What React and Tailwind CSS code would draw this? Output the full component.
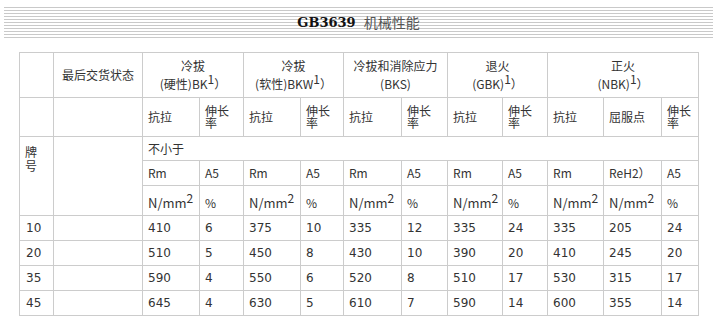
import React from "react";

const colWidths = [34, 89, 57, 44, 57, 43, 58, 46, 55, 45, 56, 58, 37];

const dataRows = [
  ["10", "410", "6", "375", "10", "335", "12", "335", "24", "335", "205", "24"],
  ["20", "510", "5", "450", "8", "430", "10", "390", "20", "410", "245", "20"],
  ["35", "590", "4", "550", "6", "520", "8", "510", "17", "530", "315", "17"],
  ["45", "645", "4", "630", "5", "610", "7", "590", "14", "600", "355", "14"],
];

const cjk = "font-['Noto_Sans_CJK_SC',sans-serif]";
const num = "font-['DejaVu_Sans',sans-serif]";
const td = "border border-[#cccccc] px-[5px] align-middle";

const Sup = ({ children }) => (
  <span className="relative -top-[5px] text-[12px] leading-none">{children}</span>
);

const Unit = () => (
  <>
    N/mm<Sup>2</Sup>
  </>
);

export default function App() {
  const unitRow = ["unit", "%", "unit", "%", "unit", "%", "unit", "%", "unit", "unit", "%"];
  const symRow = ["Rm", "A5", "Rm", "A5", "Rm", "A5", "Rm", "A5", "Rm", "ReH2）", "A5"];
  const subRow = ["抗拉", "伸长率", "抗拉", "伸长率", "抗拉", "伸长率", "抗拉", "伸长率", "抗拉", "屈服点", "伸长率"];
  const head = `${td} text-center leading-[18px]`;

  return (
    <div className={`w-[713px] h-[320px] bg-white text-[#333] overflow-hidden ${cjk}`}>
      {/* title bar */}
      <div className="mt-[7px] ml-[4px] h-[31px] flex items-center justify-center bg-[repeating-linear-gradient(to_bottom,#c9c9c9_0px,#c9c9c9_1px,transparent_1px,transparent_3px)]">
        <span className="font-['DejaVu_Serif',serif] font-bold text-[13px] text-[#111]">GB3639</span>
        <span className="ml-[8px] text-[14px] text-[#555]">机械性能</span>
      </div>

      <table className="mt-[14px] ml-[19px] w-[679px] table-fixed border-collapse text-[12px] leading-[14px]">
        <colgroup>
          {colWidths.map((w, i) => (
            <col key={i} style={{ width: w }} />
          ))}
        </colgroup>
        <tbody>
          <tr className="h-[45px]">
            <td className={td}></td>
            <td className={`${td} text-center`}>最后交货状态</td>
            <td colSpan={2} className={head}>
              冷拔
              <br />
              (硬性)BK<Sup>1</Sup>）
            </td>
            <td colSpan={2} className={head}>
              冷拔
              <br />
              (软性)BKW<Sup>1</Sup>）
            </td>
            <td colSpan={2} className={head}>
              冷拔和消除应力
              <br />
              (BKS)
            </td>
            <td colSpan={2} className={head}>
              退火
              <br />
              (GBK)<Sup>1</Sup>）
            </td>
            <td colSpan={3} className={head}>
              正火
              <br />
              (NBK)<Sup>1</Sup>）
            </td>
          </tr>
          <tr className="h-[39px]">
            <td className={td}></td>
            <td className={td}></td>
            {subRow.map((t, i) => (
              <td key={i} className={`${td} leading-[12px]`}>
                {t}
              </td>
            ))}
          </tr>
          <tr className="h-[24px]">
            <td rowSpan={3} className={`${td} align-top pt-[8px] leading-[14px]`}>
              牌号
            </td>
            <td rowSpan={3} className={td}></td>
            <td colSpan={11} className={td}>
              不小于
            </td>
          </tr>
          <tr className="h-[25px]">
            {symRow.map((t, i) => (
              <td key={i} className={td}>
                {t}
              </td>
            ))}
          </tr>
          <tr className="h-[30px]">
            {unitRow.map((t, i) => (
              <td key={i} className={`${td} text-[13px] pt-[4px]`}>
                {t === "unit" ? <Unit /> : <span className="text-[12px]">{t}</span>}
              </td>
            ))}
          </tr>
          {dataRows.map((row) => (
            <tr key={row[0]} className={`h-[25px] ${num}`}>
              <td className={`${td} px-[6px]`}>{row[0]}</td>
              <td className={td}></td>
              {row.slice(1).map((v, i) => (
                <td key={i} className={td}>
                  {v}
                </td>
              ))}
            </tr>
          ))}
        </tbody>
      </table>
    </div>
  );
}
